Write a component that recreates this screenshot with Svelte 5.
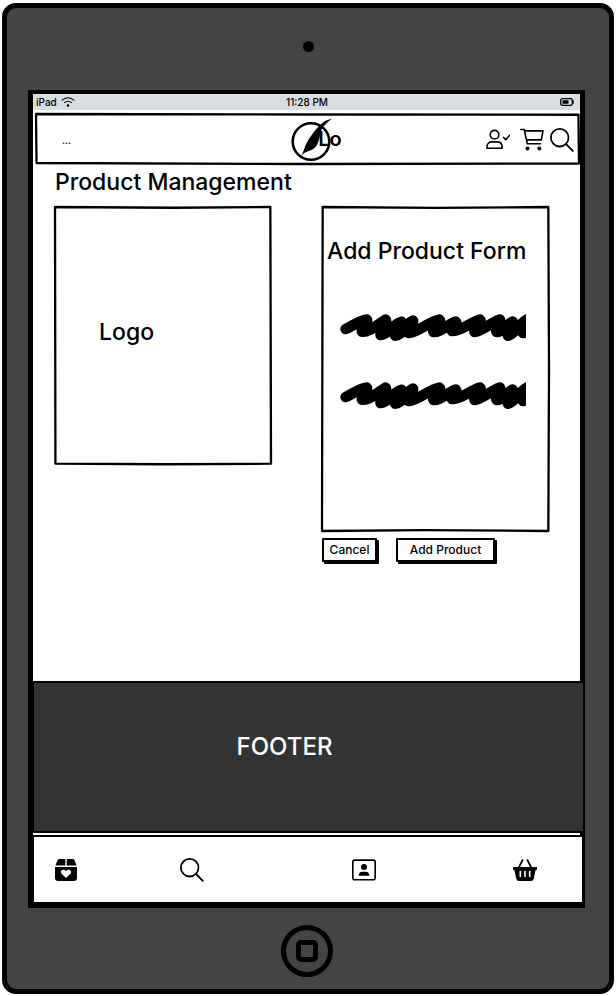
<script>
  const scribbles = ['Product name', 'Product details'];
</script>

{#snippet outline(d)}
  <svg class="outline" viewBox="0 0 200 200" preserveAspectRatio="none" aria-hidden="true">
    <path {d} vector-effect="non-scaling-stroke" />
  </svg>
{/snippet}

{#snippet search()}
  <svg class="icon" viewBox="0 0 24 24" aria-hidden="true">
    <circle cx="9.7" cy="9.7" r="8.8" />
    <path d="M16 16L23.3 23.3" />
  </svg>
{/snippet}

<div class="device">
  <div class="top"><span class="camera"></span></div>

  <div class="screen">
    <div class="status">
      <span class="carrier">iPad
        <svg width="14" height="10" viewBox="0 0 14 10" aria-hidden="true">
          <path d="M.6 3.4Q7-2 13.4 3.4M3.2 5.9Q7 2.6 10.8 5.9" fill="none" stroke="#000" stroke-width="1.1" />
          <circle cx="7" cy="8.5" r="1.3" />
        </svg>
      </span>
      <time>11:28 PM</time>
      <svg class="battery" width="14" height="8" viewBox="0 0 14 8" aria-hidden="true">
        <rect x=".7" y=".7" width="11.6" height="6.6" rx="1.8" fill="none" stroke="#000" stroke-width="1.3" />
        <path d="M2.5 2.3H8.5V5.7H2.5ZM12.5 2.3H13.7V5.7H12.5Z" />
      </svg>
    </div>

    <header>
      {@render outline('M0 0L100 2L199.8 3L200 198L100 200L.2 196Z')}
      <button class="dots" aria-label="Menu">...</button>
      <a class="brand" href="#home">
        <svg width="42" height="44" viewBox="0 0 42 44" aria-hidden="true">
          <circle cx="20" cy="23.5" r="18.3" fill="none" stroke="#000" stroke-width="2.6" />
          <path d="M9.5 39.5C14 31 14 26 20 18C27 8 33 2 41 .8C36 4.5 34 7 31 10C29 16 29 20 26 27C21 35 14 31 9.5 39.5Z" />
        </svg>
        <span>Lo</span>
      </a>
      <div class="tools">
        <button aria-label="Account">
          <svg class="icon thin" viewBox="0 0 24 24" aria-hidden="true">
            <circle cx="8.5" cy="6.7" r="4.3" />
            <path d="M1 20.2V18.5C1 15.5 3.5 13.9 6 13.9H11C14 13.9 16 15.8 16 18.5V20.2ZM17.5 9.3L19.7 11.7L23.7 7.2" />
          </svg>
        </button>
        <button aria-label="Cart">
          <svg class="icon thin" viewBox="0 0 24 24" aria-hidden="true">
            <path d="M.8 1.5H4.2L7.3 15.8H20.5M4.7 2.9H23L21.3 11.9H6.5" />
            <circle class="solid" cx="7.5" cy="20.5" r="2" />
            <circle class="solid" cx="19.3" cy="20.5" r="2" />
          </svg>
        </button>
        <button aria-label="Search">{@render search()}</button>
      </div>
    </header>

    <main>
      <h1>Product Management</h1>
      <div class="columns">
        <section class="panel logo">
          {@render outline('M0 0L110 .6L199.4 0L200 199L100 199.4L.4 199Z')}
          <h2>Logo</h2>
        </section>
        <form onsubmit={(e) => e.preventDefault()}>
          <div class="panel fields">
            {@render outline('M.6 0L100 .6L199.4 0L200 100L199.4 200L90 199.4L0 200Z')}
            <h2>Add Product Form</h2>
            {#each scribbles as label}
              <svg class="scribble" viewBox="0 0 558 84" role="img" aria-label={label}>
                <path d="M17 45C35 37 60 19 80 17C86 22 62 42 66 53C87 56 112 32 137 17C143 28 117 50 122 63C145 61 163 28 184 24C188 38 157 50 166 65C188 64 197 29 219 20C222 38 188 50 207 57C238 52 264 24 298 17C307 24 273 42 281 54C305 56 324 29 347 23C355 34 330 40 336 51C363 52 390 25 420 17C428 24 397 42 404 54C425 53 450 27 480 17C484 30 462 44 470 54C487 55 504 27 518 23C522 40 497 47 504 65C524 62 538 28 560 17C561 28 540 44 549 57L565 54" />
              </svg>
            {/each}
          </div>
          <div class="actions">
            <button class="raised cancel" type="button">Cancel</button>
            <button class="raised add" type="submit">Add Product</button>
          </div>
        </form>
      </div>
    </main>

    <footer>FOOTER</footer>

    <nav>
      <a href="#orders" aria-label="Orders">
        <svg width="22" height="22" viewBox="0 0 22 22">
          <path d="M4 0H10.3V6.5H.4L2.5 1.2Q3 0 4 0ZM11.7 0H18Q19 0 19.5 1.2L21.6 6.5H11.7Z" />
          <path d="M0 8H22V19Q22 22 19 22H3Q0 22 0 19Z" />
          <path d="M11 19L6.6 14.7C4.3 12 8.5 8.9 11 12.2C13.5 8.9 17.7 12 15.4 14.7Z" fill="#fff" />
        </svg>
      </a>
      <a href="#search" aria-label="Search">{@render search()}</a>
      <a href="#profile" aria-label="Profile">
        <svg width="24" height="22" viewBox="0 0 24 22">
          <rect x=".8" y="1.1" width="22.4" height="19.6" rx="2" fill="none" stroke="#000" stroke-width="1.6" />
          <circle cx="12" cy="8" r="3" />
          <path d="M6.7 16.7C6.7 13.7 8.5 12.7 10 12.7H14C15.8 12.7 17.3 14 17.3 16.7Z" />
        </svg>
      </a>
      <a href="#basket" aria-label="Basket">
        <svg width="24" height="22" viewBox="0 0 24 22">
          <path d="M0 8H24V11H22.6L20.8 19.5Q20.2 22 18 22H6Q3.8 22 3.2 19.5L1.4 11H0Z" />
          <path d="M5.5 9L9.9 .5M18.5 9L14.1 .5" stroke="#000" stroke-width="1.7" />
          <path d="M7.3 12.5V17.5M12 12.5V17.5M16.7 12.5V17.5" stroke="#fff" stroke-width="1.6" stroke-linecap="round" />
        </svg>
      </a>
    </nav>
  </div>

  <button class="home" aria-label="Home"><span></span></button>
</div>

<style>
  :global(body) {
    margin: 0;
    background: #fff;
  }
  .device {
    box-sizing: border-box;
    margin: 3px 2px 2px;
    padding: 0 24px 12px 21px;
    border: 5px solid #000;
    border-radius: 14px;
    background: #444;
    color: #000;
    font-family: Inter, "Open Sans", sans-serif;
    font-weight: 500;
  }
  button {
    font: inherit;
    color: inherit;
    padding: 0;
    border: 0;
    background: none;
    cursor: pointer;
  }
  a {
    color: inherit;
    text-decoration: none;
  }
  svg {
    display: block;
  }
  h1,
  h2 {
    margin: 0;
    font-size: 23px;
    line-height: 30px;
    font-weight: 500;
    white-space: nowrap;
  }
  .top {
    height: 82px;
    display: flex;
    justify-content: center;
    align-items: center;
    padding-left: 3px;
    box-sizing: border-box;
  }
  .camera {
    width: 11px;
    height: 11px;
    margin-bottom: 6px;
    border-radius: 50%;
    background: #000;
  }
  .screen {
    border: 5px solid #000;
    border-top-width: 4px;
    background: #fff;
  }
  .status {
    height: 16px;
    display: grid;
    grid-template-columns: 1fr auto 1fr;
    align-items: center;
    padding: 0 6px 0 3px;
    background: #d7dee1;
    font-size: 10px;
    line-height: 16px;
  }
  .status time {
    padding-left: 4px;
  }
  .carrier {
    display: flex;
    align-items: center;
    gap: 4px;
  }
  .battery {
    justify-self: end;
  }
  header {
    position: relative;
    display: grid;
    grid-template-columns: 47% auto 1fr;
    align-items: center;
    box-sizing: border-box;
    height: 50px;
    margin: 4px 1px 0 3px;
    padding-top: 2px;
  }
  .outline {
    position: absolute;
    inset: 0;
    width: 100%;
    height: 100%;
    overflow: visible;
    pointer-events: none;
  }
  .outline path {
    fill: none;
    stroke: #000;
    stroke-width: 2.3;
    stroke-linejoin: round;
  }
  .dots {
    justify-self: start;
    margin-left: 26px;
    font-size: 10px;
    line-height: 16px;
  }
  .brand {
    position: relative;
    width: 54px;
  }
  .brand span {
    position: absolute;
    left: 27px;
    top: 9px;
    font-size: 20px;
    line-height: 24px;
    font-weight: 600;
  }
  .tools {
    display: flex;
    justify-content: flex-end;
    gap: 6px;
    padding-right: 5px;
  }
  .tools button:first-child {
    margin-right: 4px;
  }
  .icon {
    width: 24px;
    height: 24px;
    fill: none;
    stroke: #000;
    stroke-width: 1.8;
  }
  .thin {
    stroke-width: 1.6;
    stroke-linejoin: round;
    stroke-linecap: round;
  }
  .solid {
    fill: #000;
    stroke: none;
  }
  main {
    min-height: 517px;
    box-sizing: border-box;
    padding: 3px 31px 0 22px;
  }
  .columns {
    display: grid;
    grid-template-columns: 216fr 227fr;
    gap: 51px;
    align-items: start;
    margin-top: 10px;
  }
  .panel {
    position: relative;
    box-sizing: border-box;
  }
  .logo {
    height: 258px;
    padding: 110px 44px;
  }
  .fields {
    height: 324px;
    padding: 29px 5px;
  }
  .scribble {
    width: 186px;
    height: 28px;
    margin: 48px 0 0 13px;
    overflow: hidden;
  }
  .scribble + .scribble {
    margin-top: 40px;
  }
  .scribble path {
    fill: none;
    stroke: #000;
    stroke-width: 32;
    stroke-linecap: round;
    stroke-linejoin: round;
  }
  .actions {
    display: flex;
    gap: 19px;
    margin-top: 7px;
  }
  .raised {
    height: 24px;
    border: 2px solid #000;
    border-radius: 1px;
    background: #fff;
    box-shadow: 2px 2px 0 #000;
    font-size: 12px;
    line-height: 20px;
    white-space: nowrap;
  }
  .cancel {
    width: 55px;
  }
  .add {
    width: 99px;
  }
  footer {
    position: relative;
    height: 152px;
    box-sizing: border-box;
    margin-right: -3px;
    padding: 50px 48px 0 0;
    border: solid #000;
    border-width: 2px 0 2px 1px;
    background: #333;
    color: #fff;
    text-align: center;
    font-size: 24px;
    line-height: 28px;
  }
  nav {
    position: relative;
    display: grid;
    grid-template-columns: 125fr 173fr 161fr 69fr;
    align-items: center;
    height: 65px;
    margin: 2px -3px 0 0;
    padding-left: 21px;
    border: 1px solid #000;
    border-top-width: 2px;
    background: #fff;
  }
  nav a {
    justify-self: start;
  }
  .home {
    display: flex;
    align-items: center;
    justify-content: center;
    box-sizing: border-box;
    width: 52px;
    height: 52px;
    margin: 17px auto 0;
    border: 5px solid #000;
    border-radius: 50%;
  }
  .home span {
    box-sizing: border-box;
    width: 22px;
    height: 22px;
    border: 5px solid #000;
    border-radius: 5px;
  }
</style>
